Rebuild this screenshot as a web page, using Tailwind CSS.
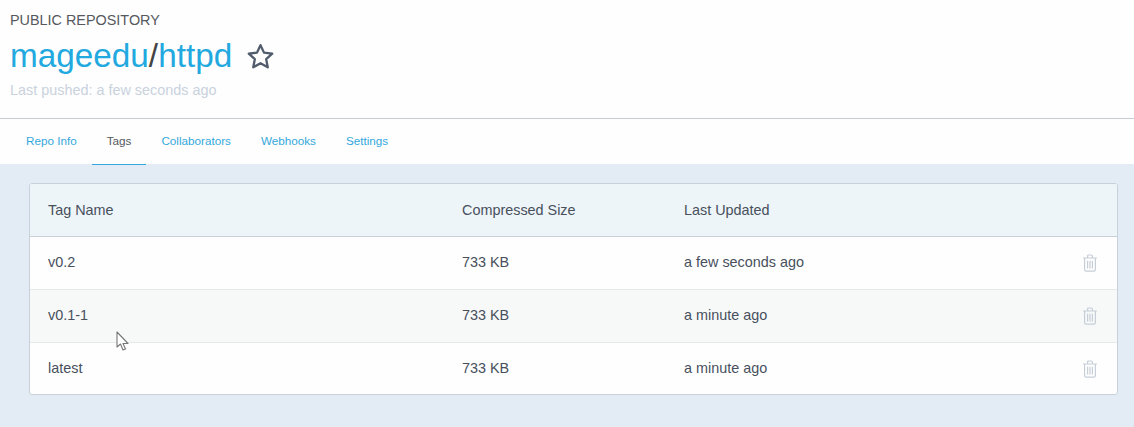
<!doctype html>
<html lang="en">
<head>
<meta charset="utf-8">
<title>mageedu/httpd</title>
<script src="https://cdn.jsdelivr.net/npm/@tailwindcss/browser@4"></script>
</head>
<body class="relative h-[427px] w-[1134px] overflow-hidden bg-[#e3ecf4] font-['Liberation_Sans',sans-serif] text-[#47505c]">

<header class="h-[119px] border-b border-[#c4ccd6] bg-[#fefefe] pl-[10px]">
    <p class="pt-[11px] text-[14.4px] leading-[18px] text-[#55585c]">PUBLIC REPOSITORY</p>
    <div class="mt-[8px] flex h-[38px] items-center">
        <h1 class="text-[33.3px] leading-[38px] text-[#22a9e0]">mageedu<span class="text-[#444]">/</span>httpd</h1>
        <svg class="ml-[14px] h-[29px] w-[29px]" viewBox="0 0 24 24" fill="none" stroke="#505b6b" stroke-width="1.9" stroke-linejoin="round">
            <path d="M12 2.6l2.9 6.2 6.8.8-5 4.6 1.3 6.7-6-3.3-6 3.3 1.3-6.7-5-4.6 6.8-.8z"/>
        </svg>
    </div>
    <p class="mt-[6px] text-[14.4px] leading-[18px] text-[#c9d2dd]">Last pushed: a few seconds ago</p>
</header>

<nav class="flex h-[45px] bg-[#fefefe] pl-[11px] text-[11.7px] text-[#34a8dc]">
    <a class="flex h-[46px] items-center border-b border-transparent px-[15px] pb-[1px]">Repo Info</a>
    <a class="flex h-[46px] items-center border-b border-[#34a8dc] px-[15px] pb-[1px] text-[#55585c]">Tags</a>
    <a class="flex h-[46px] items-center border-b border-transparent px-[15px] pb-[1px]">Collaborators</a>
    <a class="flex h-[46px] items-center border-b border-transparent px-[15px] pb-[1px]">Webhooks</a>
    <a class="flex h-[46px] items-center border-b border-transparent px-[15px] pb-[1px]">Settings</a>
</nav>

<main class="px-[29px] pt-[19px]">
    <div class="w-[1089px] overflow-hidden rounded-[3px] border border-[#c8d1db] bg-[#fefefe] text-[14.4px]">
        <div class="grid h-[53px] grid-cols-[414px_222px_1fr] items-center border-b border-[#c8d1db] bg-[#eef5f9] pt-[1px] pl-[18px]">
            <span>Tag Name</span>
            <span>Compressed Size</span>
            <span>Last Updated</span>
        </div>

        <div class="grid h-[53px] grid-cols-[414px_222px_1fr_auto] items-center border-b border-[#e6e9ec] pb-[1px] pl-[18px] pr-[19px]">
            <span>v0.2</span>
            <span>733 KB</span>
            <span>a few seconds ago</span>
            <svg class="h-[18px] w-[16px]" viewBox="0 0 16 18" fill="none" stroke="#c6ced8" stroke-width="1.2">
                <path d="M1 4h14M2.6 4v11.6q0 1.6 1.6 1.6h7.6q1.600 0 1.600-1.600V4M5.600 4V2q0-1 1-1h2.800q1 0 1 1v2M5.600 6.800v7.600M8 6.800v7.600M10.400 6.800v7.600"/>
            </svg>
        </div>

        <div class="grid h-[53px] grid-cols-[414px_222px_1fr_auto] items-center border-b border-[#e6e9ec] bg-[#f7f8f8] pb-[1px] pl-[18px] pr-[19px]">
            <span>v0.1-1</span>
            <span>733 KB</span>
            <span>a minute ago</span>
            <svg class="h-[18px] w-[16px]" viewBox="0 0 16 18" fill="none" stroke="#c6ced8" stroke-width="1.2">
                <path d="M1 4h14M2.6 4v11.6q0 1.6 1.6 1.6h7.6q1.600 0 1.600-1.600V4M5.600 4V2q0-1 1-1h2.800q1 0 1 1v2M5.600 6.800v7.600M8 6.800v7.600M10.400 6.800v7.600"/>
            </svg>
        </div>

        <div class="grid h-[51px] grid-cols-[414px_222px_1fr_auto] items-center pl-[18px] pr-[19px]">
            <span>latest</span>
            <span>733 KB</span>
            <span>a minute ago</span>
            <svg class="h-[18px] w-[16px]" viewBox="0 0 16 18" fill="none" stroke="#c6ced8" stroke-width="1.2">
                <path d="M1 4h14M2.6 4v11.6q0 1.6 1.6 1.6h7.6q1.600 0 1.600-1.600V4M5.600 4V2q0-1 1-1h2.800q1 0 1 1v2M5.600 6.800v7.600M8 6.800v7.600M10.400 6.800v7.600"/>
            </svg>
        </div>
    </div>
</main>

<!-- mouse pointer in the recording -->
<svg class="absolute left-[116px] top-[331px] h-[21px] w-[14px]" viewBox="0 0 14 21" fill="#fff" stroke="#777" stroke-width="1.100" stroke-linejoin="round">
    <path d="M1 1v15l3.500-3 2.500 6 2.500-1-2.500-5.500h5z"/>
</svg>

</body>
</html>
